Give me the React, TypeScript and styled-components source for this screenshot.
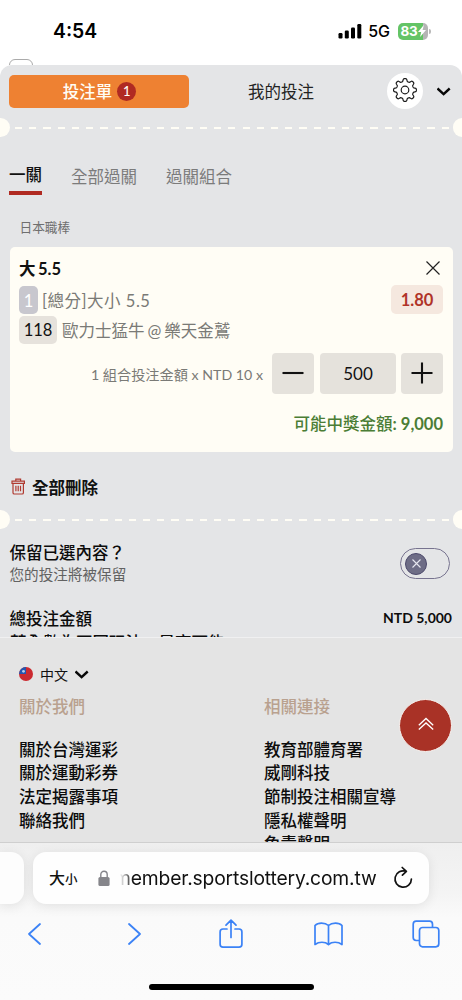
import React from "react";
import styled, { createGlobalStyle, css } from "styled-components";

const cjk = `"Noto Sans CJK TC"`;
const siteFont = `Lato, ${cjk}, sans-serif`;
const systemFont = `Inter, ${cjk}, sans-serif`;

const cream = "#fffdf5";
const red = "#b02a22";

const GlobalStyle = createGlobalStyle`
  * { box-sizing: border-box; }
  body { margin: 0; background: #fff; }
  button { border: 0; padding: 0; background: none; font: inherit; color: inherit; }
  svg { display: block; flex: none; }
`;

const Screen = styled.div`
  width: 462px;
  height: 1000px;
  display: flex;
  flex-direction: column;
  overflow: hidden;
  background: #fff;
  color: #111;
  font-family: ${siteFont};
`;

/* ---------- status bar ---------- */

const StatusBar = styled.header`
  height: 59px;
  flex: none;
  display: flex;
  align-items: center;
  justify-content: space-between;
  padding: 3px 31px 0 53px;
  font-family: ${systemFont};
  color: #000;
`;

const Clock = styled.span`
  font-size: 19.4px;
  line-height: 22px;
  font-weight: 600;
`;

const StatusIcons = styled.div`
  display: flex;
  align-items: center;
`;

const Network = styled.span`
  font-size: 16px;
  line-height: 20px;
  font-weight: 500;
  margin: 0 8px 0 6px;
`;

const Battery = styled.div`
  width: 30px;
  height: 17px;
  border-radius: 5px;
  display: flex;
  align-items: center;
  justify-content: center;
  background: linear-gradient(to right, #64c466 83%, #b5b5b5 83%);
  color: #fff;
  font-size: 13.5px;
  font-weight: 700;
  letter-spacing: -0.2px;
`;

const BatteryCap = styled.div`
  width: 2px;
  height: 5px;
  margin-left: 1px;
  border-radius: 0 2px 2px 0;
  background: #b9b9b9;
`;

const PageEdge = styled.div`
  height: 6px;
  flex: none;
  padding-left: 9px;
  overflow: hidden;
`;

const MenuStub = styled.div`
  width: 24px;
  height: 20px;
  border: 1px solid #aaa;
  border-radius: 6px;
`;

/* ---------- bet slip ---------- */

const Sheet = styled.main`
  height: 573px;
  flex: none;
  display: flex;
  flex-direction: column;
  overflow: hidden;
  border-radius: 12px 12px 0 0;
  background: #e4e5e7;
  border-bottom: 1px solid #f0f0f1;
`;

const SheetHeader = styled.div`
  height: 52px;
  flex: none;
  display: flex;
  align-items: center;
  padding: 0 11px 0 9px;
`;

const SlipTab = styled.button<{ $active?: boolean }>`
  width: 180px;
  height: 33px;
  display: flex;
  align-items: center;
  justify-content: center;
  gap: 5px;
  border-radius: 5px;
  font-size: 16.5px;
  color: ${(p) => (p.$active ? "#fffdf5" : "#222")};
  background: ${(p) => (p.$active ? "#ee8132" : "transparent")};
  font-weight: ${(p) => (p.$active ? 500 : 400)};
  padding-left: ${(p) => (p.$active ? 1 : 4)}px;
`;

const Count = styled.span`
  width: 19px;
  height: 19px;
  border-radius: 50%;
  display: grid;
  place-items: center;
  background: ${red};
  font-size: 13px;
  line-height: 19px;
  font-weight: 500;
`;

const GearButton = styled.button`
  width: 36px;
  height: 36px;
  margin: 0 14px 0 18px;
  border-radius: 50%;
  display: grid;
  place-items: center;
  background: #fff;
  padding-bottom: 3px;
`;

const Perforation = styled.div`
  height: 20px;
  flex: none;
  display: flex;
  align-items: center;
  justify-content: space-between;
`;

const Notch = styled.span<{ $side: "left" | "right" }>`
  width: 9.5px;
  height: 19px;
  background: ${cream};
  border-radius: ${(p) => (p.$side === "left" ? "0 10px 10px 0" : "10px 0 0 10px")};
`;

const Dashes = styled.span`
  width: 438px;
  height: 2.5px;
  margin: 2px 0 0 5px;
  background: repeating-linear-gradient(to right, ${cream} 0 7.2px, transparent 7.2px 14.22px);
`;

const Modes = styled.nav`
  height: 58px;
  flex: none;
  display: flex;
  align-items: flex-end;
  gap: 29px;
  padding-left: 9px;
`;

const Mode = styled.button<{ $active?: boolean }>`
  height: 37px;
  font-size: 16.5px;
  line-height: 33px;
  border-bottom: 4px solid transparent;
  color: #7b7b7b;
  padding-top: 3px;
  ${(p) =>
    p.$active &&
    css`
      color: #111;
      font-weight: 500;
      border-bottom-color: ${red};
      padding-top: 1px;
    `}
`;

const League = styled.h3`
  height: 52px;
  margin: 0;
  flex: none;
  padding: 23px 0 0 19.5px;
  font-size: 12.7px;
  line-height: 19px;
  font-weight: 400;
  color: #6f6f6f;
`;

const Card = styled.section`
  height: 205px;
  flex: none;
  margin: 0 9.5px;
  padding: 7px 9.5px 0 9.5px;
  display: flex;
  flex-direction: column;
  border-radius: 5px;
  background: ${cream};
`;

const CardRow = styled.div<{ $height: number; $end?: number }>`
  height: ${(p) => p.$height}px;
  padding-right: ${(p) => p.$end ?? 0}px;
  display: flex;
  align-items: center;
  color: #7a7a76;
  font-size: 16.5px;
`;

const Spacer = styled.span`
  flex: 1;
`;

const Pick = styled.strong`
  font-size: 16.5px;
  font-weight: 700;
  color: #111;
  word-spacing: -1.5px;
`;

const Tag = styled.span<{ $tone: "grey" | "sand" | "rose" }>`
  height: 28px;
  flex: none;
  display: grid;
  place-items: center;
  border-radius: 5px;
  font-size: 16.5px;
  ${(p) => p.$tone === "grey" && css`width: 19px; margin-right: 4px; background: #c8c7ce; color: #fff; padding-top: 2px;`}
  ${(p) => p.$tone === "sand" && css`width: 38px; margin-right: 5px; background: #e6e2dc; color: #111;`}
  ${(p) => p.$tone === "rose" && css`width: 52px; height: 29px; background: #f5e8df; color: #b03328; font-weight: 700;`}
`;

const Detail = styled.span<{ $spacing?: number; $gap?: number }>`
  letter-spacing: ${(p) => p.$spacing ?? 0}px;
  word-spacing: ${(p) => p.$gap ?? 0}px;
  white-space: nowrap;
`;

const Stake = styled.span`
  margin-right: 9px;
  font-size: 14.2px;
  white-space: nowrap;
`;

const StepButton = styled.button`
  width: 42px;
  height: 41px;
  display: grid;
  place-items: center;
  border-radius: 4px;
  background: #e5e2dc;
  padding-bottom: 2px;
`;

const Amount = styled.div`
  width: 76px;
  height: 41px;
  margin: 0 5px 0 6px;
  display: grid;
  place-items: center;
  border-radius: 4px;
  background: #e5e2dc;
  color: #111;
  font-size: 17px;
`;

const Payout = styled.span`
  color: #4b7d35;
  font-size: 16.5px;
  font-weight: 500;
  b { font-weight: 700; }
`;

const ClearAll = styled.button`
  height: 57px;
  flex: none;
  display: flex;
  align-items: center;
  gap: 7px;
  padding: 13px 0 0 11px;
  font-size: 16.5px;
  font-weight: 700;
  color: #111;
  svg { margin-bottom: 1px; }
`;

const Setting = styled.div`
  height: 77px;
  flex: none;
  display: flex;
  align-items: flex-start;
  justify-content: space-between;
  padding: 12px 12px 0 9.5px;
`;

const SettingText = styled.div`
  padding-top: 1px;
`;

const SettingTitle = styled.div`
  font-size: 16.5px;
  line-height: 23px;
  font-weight: 500;
  color: #0c0c0c;
`;

const SettingNote = styled.div`
  font-size: 14.6px;
  line-height: 20px;
  color: #626262;
`;

const Toggle = styled.div`
  width: 50px;
  height: 31px;
  margin-top: 7px;
  padding: 0 4px;
  display: flex;
  align-items: center;
  border: 1px solid #77738f;
  border-radius: 16px;
`;

const Knob = styled.span`
  width: 22px;
  height: 22px;
  display: grid;
  place-items: center;
  border-radius: 50%;
  border: 1px solid #4d4a6c;
  background: #6e6d86;
`;

const Total = styled.div`
  height: 23px;
  flex: none;
  display: flex;
  align-items: center;
  justify-content: space-between;
  padding: 0 10px 0 9.5px;
  font-size: 16.5px;
  font-weight: 500;
  color: #0c0c0c;
  b { font-size: 14px; font-weight: 700; }
`;

const TotalNote = styled.div`
  flex: none;
  padding: 2px 0 0 10px;
  font-size: 16.5px;
  line-height: 24px;
  font-weight: 500;
  color: #0c0c0c;
`;

/* ---------- site footer ---------- */

const Footer = styled.footer`
  position: relative;
  height: 204px;
  flex: none;
  overflow: hidden;
  padding: 26px 0 0 19px;
  background: #e4e4e4;
`;

const Language = styled.div`
  height: 20px;
  display: flex;
  align-items: center;
  gap: 7px;
  font-size: 14px;
`;

const Columns = styled.div`
  display: grid;
  grid-template-columns: 245px 1fr;
  margin-top: 11px;
`;

const ColumnTitle = styled.h4`
  margin: 0 0 19.5px;
  font-size: 16.5px;
  line-height: 24px;
  font-weight: 500;
  color: #b9a18f;
`;

const FooterLink = styled.div`
  font-size: 16.5px;
  line-height: 23.7px;
  font-weight: 500;
  color: #0c0c0c;
`;

const ToTop = styled.button`
  position: absolute;
  right: 10px;
  top: 61px;
  width: 53px;
  height: 53px;
  display: grid;
  place-items: center;
  border-radius: 50%;
  border: 1px solid #f7f2ef;
  background: #a93226;
  padding-bottom: 4px;
`;

/* ---------- browser chrome ---------- */

const Browser = styled.div`
  height: 158px;
  flex: none;
  border-top: 1px solid #cfcfcf;
  background: linear-gradient(to bottom, #efefef 0, #f4f4f4 50px, #fafafa 75px, #fbfbfb 158px);
`;

const AddressRow = styled.div`
  display: flex;
  gap: 9px;
  padding-top: 9px;
`;

const PreviousTab = styled.div`
  width: 24px;
  height: 52px;
  border-radius: 0 13px 13px 0;
  background: #fdfdfd;
  box-shadow: 0 2px 12px rgba(0, 0, 0, 0.09);
`;

const Address = styled.div`
  width: 396px;
  height: 52px;
  padding: 0 16px 0 16px;
  display: flex;
  align-items: center;
  border-radius: 13px;
  background: #fefefe;
  box-shadow: 0 2px 12px rgba(0, 0, 0, 0.09);
  font-family: ${systemFont};
  color: #111;
`;

const TextSize = styled.span`
  width: 48.5px;
  padding-top: 2px;
  font-size: 16px;
  font-weight: 500;
  line-height: 24px;
  small { font-size: 12.5px; }
`;

const Url = styled.div`
  width: 259px;
  margin: 0 16px 0 8px;
  display: flex;
  justify-content: flex-end;
  overflow: hidden;
  font-size: 19.3px;
  line-height: 26px;
  letter-spacing: -0.17px;
  white-space: nowrap;
  mask-image: linear-gradient(to right, transparent 2px, #000 15px);
`;

const Toolbar = styled.div`
  height: 60px;
  display: flex;
  align-items: center;
  justify-content: space-between;
  padding: 0 21px 0 19px;
  color: #3b82f6;
`;

const Tool = styled.button`
  width: 30px;
  height: 32px;
  display: grid;
  place-items: center;
`;

const HomeIndicator = styled.div`
  width: 165px;
  height: 6px;
  margin: 20px auto 0;
  border-radius: 3px;
  background: #000;
`;

/* ---------- icons ---------- */

const Signal = () => (
  <svg width="24" height="16" viewBox="0 0 24 16" fill="#000">
    <rect x="0.5" y="10" width="4" height="5.5" rx="1.2" />
    <rect x="6.8" y="7.5" width="4" height="8" rx="1.2" />
    <rect x="13" y="4.5" width="4" height="11" rx="1.2" />
    <rect x="19.3" y="1" width="4" height="14.5" rx="1.2" />
  </svg>
);

const Bolt = () => (
  <svg width="8" height="12" viewBox="0 0 8 12" fill="#fff">
    <path d="M5.8 0 0 6.9h3.2L2.1 12 8 5H4.7z" />
  </svg>
);

const Gear = () => {
  const points: string[] = [];
  const steps = 160;
  for (let i = 0; i <= steps; i++) {
    const a = (i / steps) * Math.PI * 2;
    const wave = Math.tanh(2 * Math.cos(8 * a)) / Math.tanh(2);
    const r = 10 + wave * 1.4;
    points.push(`${(13 + r * Math.sin(a)).toFixed(2)} ${(13 - r * Math.cos(a)).toFixed(2)}`);
  }
  return (
    <svg width="26" height="26" viewBox="0 0 26 26" fill="none" stroke="#1c1c1c" strokeWidth="1.2" strokeLinejoin="round">
      <path d={`M${points.join("L")}Z`} />
      <circle cx="13" cy="13" r="3.8" />
    </svg>
  );
};

const Chevron = () => (
  <svg width="14" height="10" viewBox="0 0 14 10" fill="none" stroke="#080808" strokeWidth="2.4">
    <path d="M.5 2.5 6.6 8.200 12.700 2.500" />
  </svg>
);

const Cross = ({ size, color, width }: { size: number; color: string; width: number }) => (
  <svg width={size} height={size} viewBox={`0 0 ${size} ${size}`} stroke={color} strokeWidth={width}>
    <path d={`M.5.5 ${size - 0.5} ${size - 0.5}M${size - 0.5}.5.5 ${size - 0.5}`} />
  </svg>
);

const Trash = () => (
  <svg width="14" height="17" viewBox="0 0 14 17" fill="none" stroke="#b03a30" strokeWidth="1.2">
    <path d="M1 3.100h12.400v2.300H1zM4.800 3V1.100h4.800V3M2 5.500v9.200q0 1.300 1.300 1.300h7.800q1.300 0 1.300-1.300V5.500M4.900 7.800v5.400M7.200 7.800v5.400M9.500 7.800v5.400" />
  </svg>
);

const Step = ({ plus }: { plus?: boolean }) => (
  <svg width="22" height="22" viewBox="0 0 22 22" stroke="#111" strokeWidth="2.1">
    <path d={plus ? "M.5 11h21M11 .5v21" : "M.5 11h21"} />
  </svg>
);

const Flag = () => (
  <svg width="14" height="14" viewBox="0 0 14 14">
    <circle cx="7" cy="7" r="7" fill="#cb2a30" />
    <path d="M7 0v7H0a7 7 0 0 1 7-7z" fill="#2456b0" />
    <circle cx="4.5" cy="4.3" r="1.4" fill="#b9cdea" />
  </svg>
);

const DoubleUp = () => (
  <svg width="16" height="14" viewBox="0 0 16 14" fill="none" stroke="#fff" strokeWidth="1.3">
    <path d="M.8 8.200 8 1.500l7.200 6.700M.8 12.600 8 5.900l7.200 6.700" />
  </svg>
);

const Lock = () => (
  <svg width="12" height="17" viewBox="0 0 12 17">
    <path d="M2.8 8V4.500a3.200 3.200 0 0 1 6.400 0V8" fill="none" stroke="#85858a" strokeWidth="1.4" />
    <rect x="0.4" y="7" width="11.2" height="9" rx="1.6" fill="#85858a" />
  </svg>
);

const Reload = () => (
  <svg width="20" height="24" viewBox="0 0 20 24" fill="none" stroke="#111" strokeWidth="1.7" strokeLinecap="round" strokeLinejoin="round">
    <path d="M13 5.300A8.200 8.200 0 1 0 18.400 13M9.200 1.500 13.400 5.400 9.400 9.200" />
  </svg>
);

const Arrow = ({ next }: { next?: boolean }) => (
  <svg width="18" height="24" viewBox="0 0 18 24" fill="none" stroke="currentColor" strokeWidth="1.8" strokeLinecap="round" strokeLinejoin="round">
    <path d={next ? "M6 2 17 12 6 22" : "M15 2 4 12 15 22"} />
  </svg>
);

const Share = () => (
  <svg width="25" height="30" viewBox="0 0 25 30" fill="none" stroke="currentColor" strokeWidth="1.7" strokeLinecap="round" strokeLinejoin="round">
    <path d="M9 10H5Q2.100 10 2.100 12.900v12.300q0 2.900 2.900 2.900h16q2.900 0 2.900-2.900V12.900Q23.900 10 21 10H17M13 18.500V1.500M8 6.200l5-5 5 5" />
  </svg>
);

const Book = () => (
  <svg width="30" height="24" viewBox="0 0 30 24" fill="none" stroke="currentColor" strokeWidth="1.7" strokeLinejoin="round">
    <path d="M15.500 3.500C12 .2 5 .2 2 3.500V22.500C6 19.500 12 19.500 15.500 22.500 19 19.500 25 19.500 29 22.500V3.500C26 .2 19 .2 15.500 3.500zV22.500" />
  </svg>
);

const Tabs = () => (
  <svg width="28" height="28" viewBox="0 0 28 28" fill="none" stroke="currentColor" strokeWidth="1.7">
    <path d="M7.500 20.500H4.200Q1.200 20.500 1.200 17.500V4.200q0-3 3-3h13.300q3 0 3 3v3.300" />
    <rect x="7.5" y="7.5" width="19.3" height="19.3" rx="3" />
  </svg>
);

const Divider = () => (
  <Perforation>
    <Notch $side="left" />
    <Dashes />
    <Notch $side="right" />
  </Perforation>
);

const about = ["關於台灣運彩", "關於運動彩券", "法定揭露事項", "聯絡我們"];
const links = ["教育部體育署", "威剛科技", "節制投注相關宣導", "隱私權聲明", "免責聲明"];

export default function App() {
  return (
    <Screen>
      <GlobalStyle />
      <StatusBar>
        <Clock>4:54</Clock>
        <StatusIcons>
          <Signal />
          <Network>5G</Network>
          <Battery>
            83
            <Bolt />
          </Battery>
          <BatteryCap />
        </StatusIcons>
      </StatusBar>
      <PageEdge>
        <MenuStub />
      </PageEdge>

      <Sheet>
        <SheetHeader>
          <SlipTab $active>
            投注單<Count>1</Count>
          </SlipTab>
          <SlipTab>我的投注</SlipTab>
          <GearButton aria-label="設定">
            <Gear />
          </GearButton>
          <Chevron />
        </SheetHeader>
        <Divider />
        <Modes>
          <Mode $active>一關</Mode>
          <Mode>全部過關</Mode>
          <Mode>過關組合</Mode>
        </Modes>
        <League>日本職棒</League>

        <Card>
          <CardRow $height={27} $end={3}>
            <Pick>大 5.5</Pick>
            <Spacer />
            <Cross size={14} color="#222" width={1.2} />
          </CardRow>
          <CardRow $height={37}>
            <Tag $tone="grey">1</Tag>
            <Detail $spacing={0.5}>[總分]大小 5.5</Detail>
            <Spacer />
            <Tag $tone="rose">1.80</Tag>
          </CardRow>
          <CardRow $height={24}>
            <Tag $tone="sand">118</Tag>
            <Detail $gap={-1.2}>歐力士猛牛 @ 樂天金鷲</Detail>
          </CardRow>
          <CardRow $height={63}>
            <Spacer />
            <Stake>1 組合投注金額 x NTD 10 x</Stake>
            <StepButton aria-label="減少">
              <Step />
            </StepButton>
            <Amount>500</Amount>
            <StepButton aria-label="增加">
              <Step plus />
            </StepButton>
          </CardRow>
          <CardRow $height={36}>
            <Spacer />
            <Payout>
              可能中獎金額<b>: 9,000</b>
            </Payout>
          </CardRow>
        </Card>

        <ClearAll>
          <Trash />
          全部刪除
        </ClearAll>
        <Divider />
        <Setting>
          <SettingText>
            <SettingTitle>保留已選內容？</SettingTitle>
            <SettingNote>您的投注將被保留</SettingNote>
          </SettingText>
          <Toggle>
            <Knob>
              <Cross size={9} color="#e6e6ee" width={1.1} />
            </Knob>
          </Toggle>
        </Setting>
        <Total>
          總投注金額<b>NTD 5,000</b>
        </Total>
        <TotalNote>若全數為不同玩法，最高可能</TotalNote>
      </Sheet>

      <Footer>
        <Language>
          <Flag />
          中文
          <Chevron />
        </Language>
        <Columns>
          <div>
            <ColumnTitle>關於我們</ColumnTitle>
            {about.map((item) => (
              <FooterLink key={item}>{item}</FooterLink>
            ))}
          </div>
          <div>
            <ColumnTitle>相關連接</ColumnTitle>
            {links.map((item) => (
              <FooterLink key={item}>{item}</FooterLink>
            ))}
          </div>
        </Columns>
        <ToTop aria-label="回到頂部">
          <DoubleUp />
        </ToTop>
      </Footer>

      <Browser>
        <AddressRow>
          <PreviousTab />
          <Address>
            <TextSize>
              大<small>小</small>
            </TextSize>
            <Lock />
            <Url>member.sportslottery.com.tw</Url>
            <Reload />
          </Address>
        </AddressRow>
        <Toolbar>
          <Tool aria-label="上一頁">
            <Arrow />
          </Tool>
          <Tool aria-label="下一頁">
            <Arrow next />
          </Tool>
          <Tool aria-label="分享">
            <Share />
          </Tool>
          <Tool aria-label="書籤">
            <Book />
          </Tool>
          <Tool aria-label="分頁">
            <Tabs />
          </Tool>
        </Toolbar>
        <HomeIndicator />
      </Browser>
    </Screen>
  );
}
